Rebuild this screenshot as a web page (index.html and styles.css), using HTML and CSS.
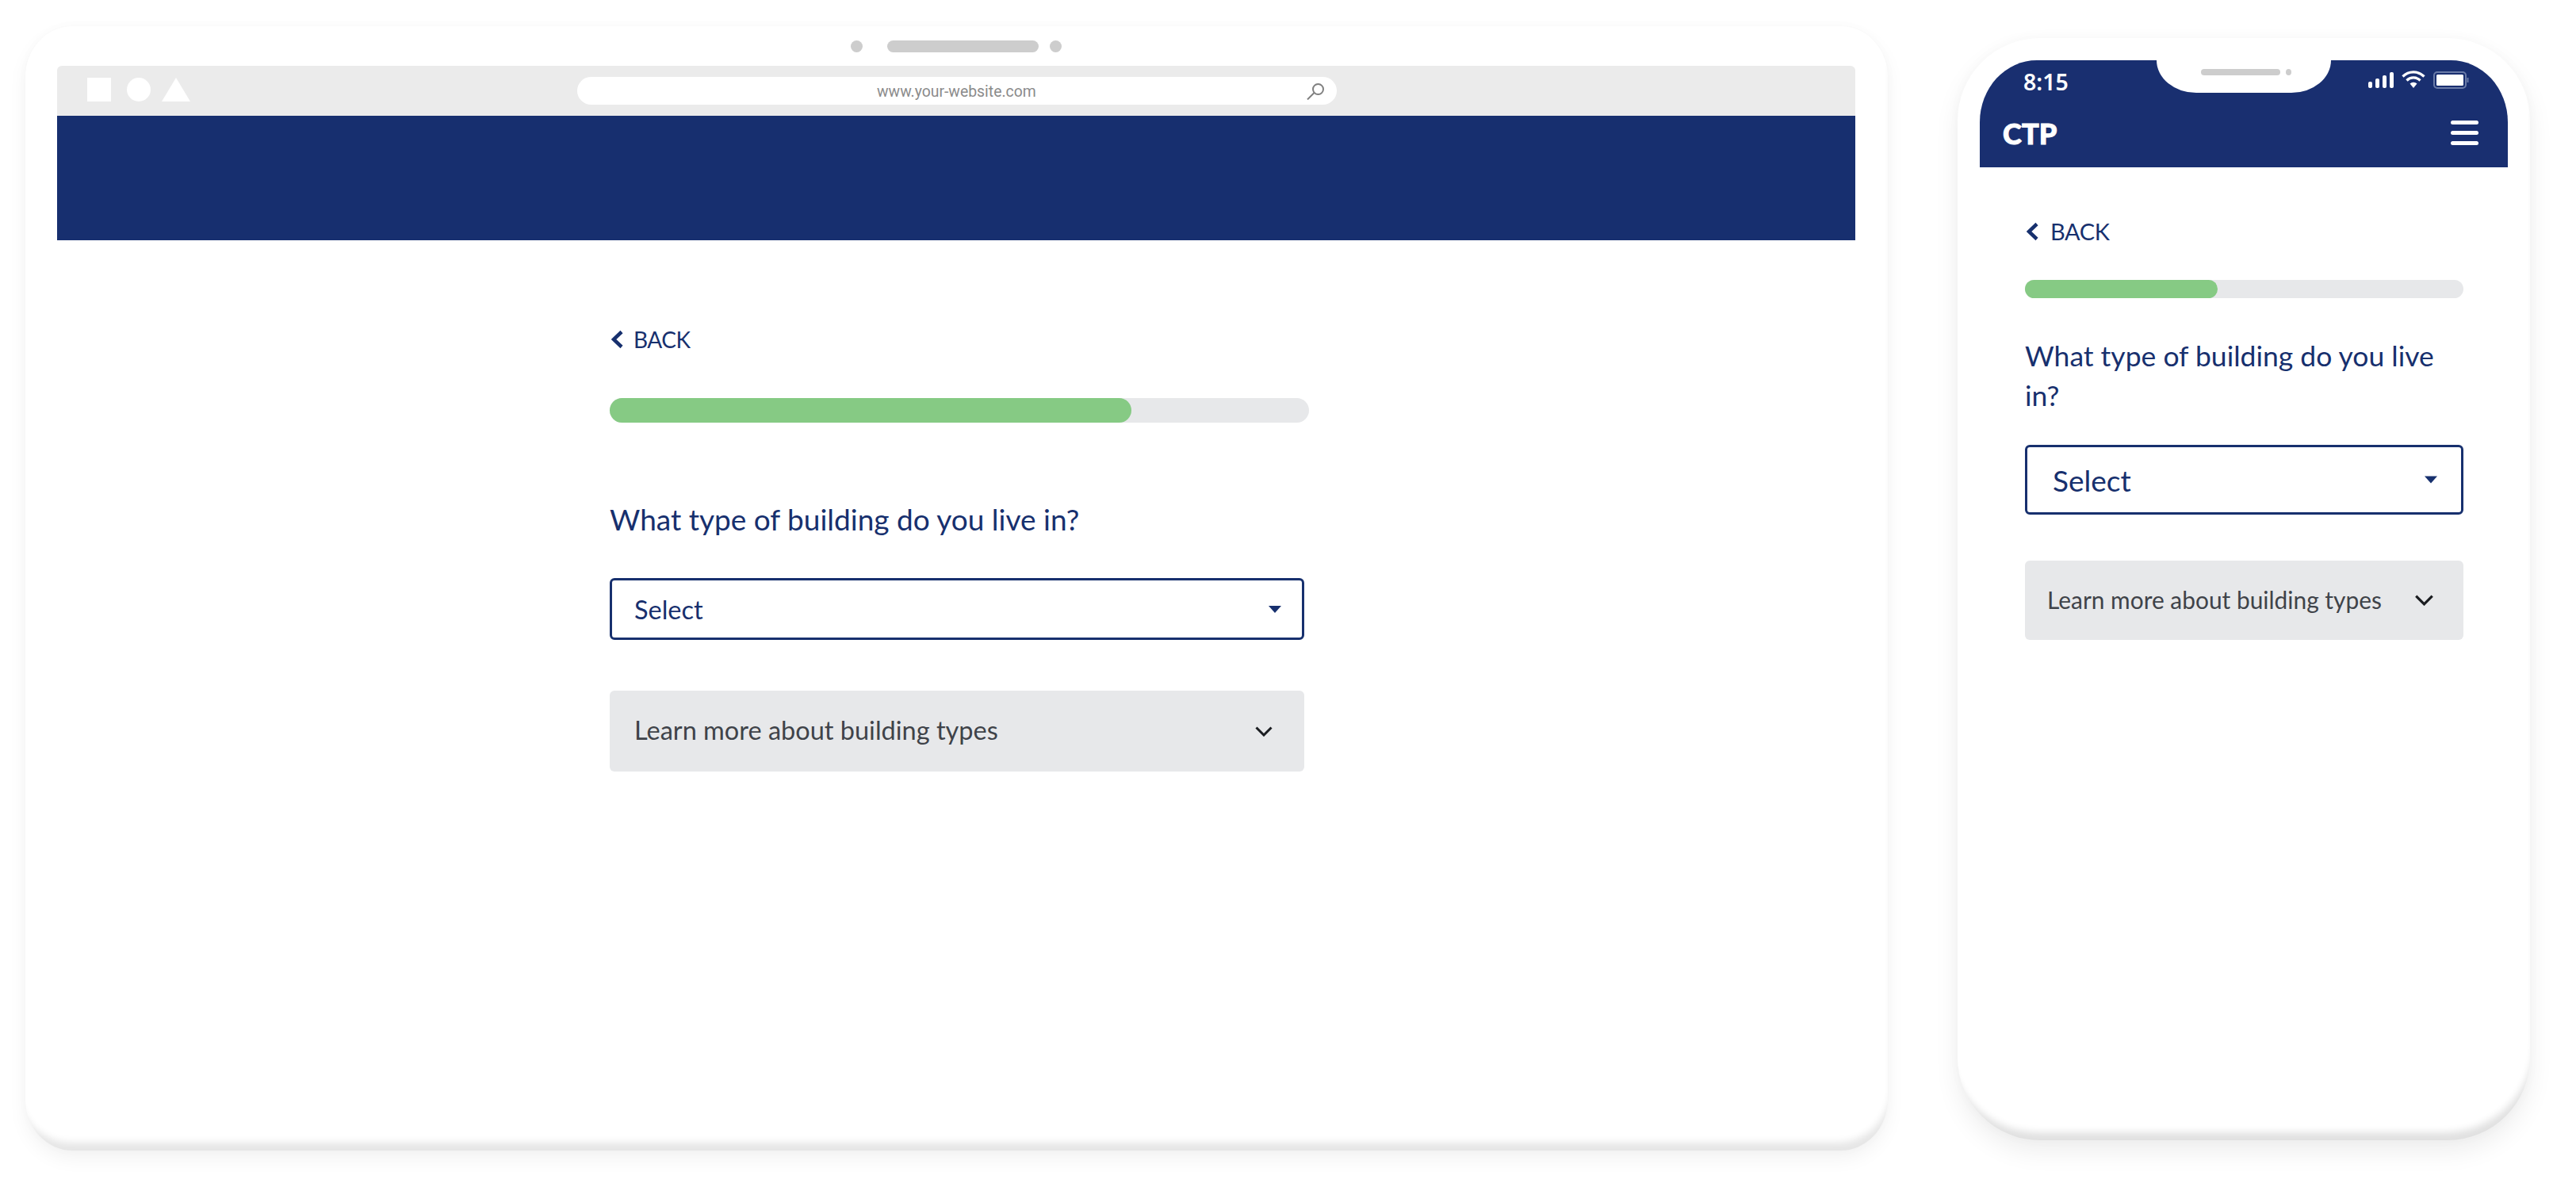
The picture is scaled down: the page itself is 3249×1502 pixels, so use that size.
FILE: index.html
```html
<!DOCTYPE html>
<html lang="en">
<head>
<meta charset="utf-8">
<title>CTP building type question</title>
<link rel="stylesheet" href="styles.css">
</head>
<body>
<main class="stage">
  <section class="tablet">
    <div class="camera">
      <span class="cam-dot"></span><span class="cam-pill"></span><span class="cam-dot"></span>
    </div>
    <div class="chrome">
      <div class="shapes">
        <span class="shape-square"></span>
        <span class="shape-circle"></span>
        <svg class="shape-tri" viewBox="0 0 36 30"><path d="M18 0 36 30H0Z"/></svg>
      </div>
      <div class="urlbar">
        <span class="url">www.your-website.com</span>
        <svg class="search" viewBox="0 0 25 22"><circle cx="16.5" cy="8.5" r="6.5"/><path d="M11.5 13 3 21.5"/></svg>
      </div>
    </div>
    <div class="desk-banner"></div>
    <div class="form form-desk">
      <a class="back">
        <svg class="back-icon" viewBox="0 0 15 24"><path d="M13 2.500 3 12l10 9.500"/></svg>
        <span>BACK</span>
      </a>
      <div class="progress"><div class="progress-fill fill-desk"></div></div>
      <h1 class="question">What type of building do you live in?</h1>
      <div class="select">
        <span>Select</span>
        <svg class="caret" viewBox="0 0 16 9"><path d="M0 0h16L8 9Z"/></svg>
      </div>
      <div class="learn">
        <span class="learn-text">Learn more about building types</span>
        <svg class="chev" viewBox="0 0 22 13"><path d="M1.500 1.500 11 11l9.500-9.500"/></svg>
      </div>
    </div>
  </section>

  <section class="phone">
    <header class="phone-head">
      <div class="status">
        <span class="time">8:15</span>
        <div class="notch"><span class="notch-pill"></span><span class="notch-dot"></span></div>
        <div class="status-icons">
          <svg class="signal" viewBox="0 0 32 20"><rect x="0" y="12" width="5" height="8" rx="2"/><rect x="9" y="8" width="5" height="12" rx="2"/><rect x="18" y="4" width="5" height="16" rx="2"/><rect x="27" y="0" width="5" height="20" rx="2"/></svg>
          <svg class="wifi" viewBox="0 0 30 22"><path class="arc" d="M1.500 7.500a19 19 0 0 1 27 0"/><path class="arc" d="M6.500 12.500a12 12 0 0 1 17 0"/><path class="wedge" d="M15 22 10.500 16.500a6.500 6.500 0 0 1 9 0Z"/></svg>
          <svg class="battery" viewBox="0 0 45 22"><rect class="bat-shell" x="1" y="1" width="40" height="20" rx="4"/><rect class="bat-core" x="4" y="4" width="34" height="14" rx="1.500"/><path class="bat-tip" d="M43.500 8v6"/></svg>
        </div>
      </div>
      <div class="brandbar">
        <span class="brand">CTP</span>
        <div class="burger"><span></span><span></span><span></span></div>
      </div>
    </header>
    <div class="form form-phone">
      <a class="back">
        <svg class="back-icon" viewBox="0 0 15 24"><path d="M13 2.500 3 12l10 9.500"/></svg>
        <span>BACK</span>
      </a>
      <div class="progress"><div class="progress-fill fill-phone"></div></div>
      <h1 class="question">What type of building do you live in?</h1>
      <div class="select">
        <span>Select</span>
        <svg class="caret" viewBox="0 0 16 9"><path d="M0 0h16L8 9Z"/></svg>
      </div>
      <div class="learn">
        <span class="learn-text">Learn more about building types</span>
        <svg class="chev" viewBox="0 0 22 13"><path d="M1.500 1.500 11 11l9.500-9.500"/></svg>
      </div>
    </div>
  </section>
</main>
</body>
</html>
```
FILE: styles.css
```css
* { box-sizing: border-box; }
html, body { margin: 0; padding: 0; background: #fff; overflow: hidden; }
body { width: 3249px; height: 1502px; font-family: "Lato", "Noto Sans", sans-serif; }

.stage { display: flex; align-items: flex-start; padding-left: 32px; }

/* Tablet mockup */
.tablet {
  width: 2349px; height: 1418px; margin-top: 33px;
  padding: 18px 41px 0 40px;
  background: #fff;
  border-radius: 60px / 64px;
  box-shadow: inset -3px -18px 10px -8px rgba(0,0,0,.1), 0 10px 24px rgba(0,0,0,.05), 0 0 14px rgba(0,0,0,.02);
}
.camera { display: flex; justify-content: center; align-items: center; gap: 15px; height: 15px; margin-bottom: 17px; }
.cam-dot { width: 15px; height: 15px; border-radius: 50%; background: #cdcdcd; }
.cam-pill { width: 191px; height: 15px; border-radius: 8px; background: #cdcdcd; margin-left: 16px; margin-right: -1px; }
.chrome {
  height: 63px; background: #ebebeb; border-radius: 6px 6px 0 0;
  display: flex; align-items: flex-start; padding: 14px 0 0 38px;
}
.shapes { display: flex; align-items: flex-start; width: 618px; gap: 20px; padding-top: 1px; }
.shape-square { width: 30px; height: 30px; background: #fff; }
.shape-circle { width: 30px; height: 30px; background: #fff; border-radius: 50%; }
.shape-tri { width: 36px; height: 30px; margin-left: -6px; fill: #fff; }
.urlbar {
  width: 958px; height: 35px; background: #fff; border-radius: 18px;
  display: flex; align-items: center; padding-left: 378px;
}
.url { font-family: "Roboto", sans-serif; font-size: 19.400px; color: #8b8b8b; white-space: nowrap; line-height: 35px; padding-top: 1px; }
.search { width: 25px; height: 22px; margin-left: auto; margin-right: 15px; fill: none; stroke: #7f7f7f; stroke-width: 2; }
.desk-banner { height: 157px; background: #172f6f; }

/* Form */
.form { color: #17306e; }
.form-desk { width: 882px; margin-left: 697px; padding-top: 113px; }
.back { display: flex; align-items: center; height: 24px; color: #17306e; }
.back-icon { width: 15px; height: 24px; margin-left: 2px; fill: none; stroke: #17306e; stroke-width: 4.500; }
.back span { font-size: 28px; letter-spacing: -.5px; line-height: 24px; margin-left: 13px; }
.progress { background: #e7e8ea; border-radius: 16px; margin-top: 62px; height: 31px; }
.progress-fill { height: 100%; background: #86ca84; border-radius: 16px; }
.fill-desk { width: 658px; }
.fill-phone { width: 243px; }
.question { margin: 97px 0 0; font-weight: 400; color: #17306e; font-size: 37px; line-height: 50px; }
.select {
  display: flex; align-items: center; justify-content: space-between;
  width: 876px; height: 78px; margin-top: 49px;
  border: 3px solid #17306e; border-radius: 6px; background: #fff;
  padding: 0 26px 0 28px; font-size: 32.500px; color: #17306e;
}
.caret { width: 16px; height: 9px; fill: #17306e; }
.learn {
  display: flex; align-items: center; justify-content: space-between;
  width: 876px; height: 102px; margin-top: 64px;
  background: #e7e8ea; border-radius: 6px;
  padding: 0 40px 0 31px; font-size: 32.500px; color: #3f4349;
}
.learn-text { padding-bottom: 3px; }
.chev { width: 22px; height: 13px; fill: none; stroke: #1b1d21; stroke-width: 3; }

/* Phone mockup */
.phone {
  width: 722px; height: 1390px; margin-top: 48px; margin-left: 88px;
  padding: 28px 28px 0 28px;
  background: #fff;
  border-radius: 104px;
  box-shadow: inset -3px -18px 10px -8px rgba(0,0,0,.12), 0 14px 32px rgba(0,0,0,.07), 0 0 16px rgba(0,0,0,.025);
}
.phone-head { height: 135px; background: #192f70; border-radius: 72px 72px 0 0 / 78px 78px 0 0; color: #fff; }
.status { display: flex; align-items: flex-start; height: 41px; }
.time { width: 223px; padding: 13px 0 0 55px; font-family: "Noto Sans", sans-serif; font-size: 28.500px; font-weight: 600; line-height: 28px; }
.notch {
  width: 220px; height: 41px; background: #fff;
  border-radius: 0 0 50px 50px / 0 0 41px 41px;
  display: flex; align-items: flex-start; gap: 7px; padding: 11px 0 0 56px;
}
.notch-pill { width: 100px; height: 8px; border-radius: 4px; background: #cdcdcd; }
.notch-dot { width: 7px; height: 8px; border-radius: 50%; background: #cdcdcd; }
.status-icons { display: flex; align-items: flex-start; padding: 13px 0 0 47px; gap: 10px; }
.signal { width: 32px; height: 20px; margin-top: 2px; fill: #fff; }
.wifi { width: 30px; height: 22px; }
.wifi .arc { fill: none; stroke: #fff; stroke-width: 3.200; }
.wifi .wedge { fill: #fff; }
.battery { width: 45px; height: 22px; margin-top: 1px; }
.bat-shell { fill: none; stroke: #6a7ba8; stroke-width: 2; }
.bat-core { fill: #fff; }
.bat-tip { stroke: #6a7ba8; stroke-width: 2; fill: none; }
.brandbar { display: flex; align-items: flex-start; justify-content: space-between; padding: 33px 37px 0 29px; }
.brand { font-size: 36px; font-weight: 900; line-height: 36px; letter-spacing: .2px; -webkit-text-stroke: 1px #fff; }
.burger { display: flex; flex-direction: column; gap: 8px; padding-top: 2px; }
.burger span { display: block; width: 35px; height: 5px; border-radius: 3px; background: #fff; }

.form-phone { padding: 69px 56px 0 57px; }
.form-phone .back span { font-size: 29px; margin-left: 15px; letter-spacing: -.4px; }
.form-phone .progress { margin-top: 49px; height: 23px; width: 553px; }
.form-phone .question { margin-top: 48px; font-size: 35.500px; }
.form-phone .select { width: 553px; height: 88px; margin-top: 37px; font-size: 37px; padding: 0 30px 0 32px; border-width: 3.500px; }
.form-phone .caret { height: 10px; }
.form-phone .learn { width: 553px; height: 100px; margin-top: 58px; font-size: 29.900px; padding: 0 37px 0 28px; }
.form-phone .chev { width: 25px; height: 14px; }
```
